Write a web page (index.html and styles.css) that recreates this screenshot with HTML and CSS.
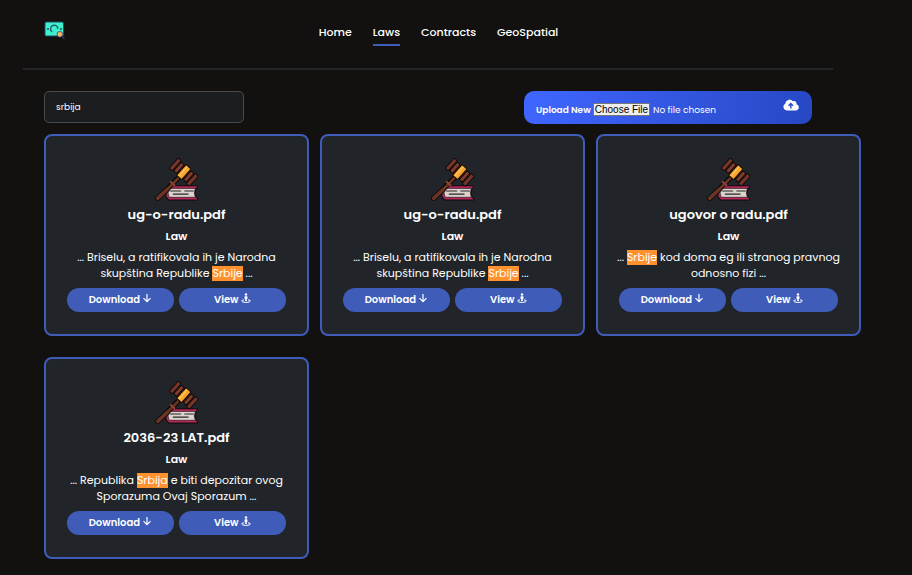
FILE: index.html
```
<!DOCTYPE html>
<html lang="sr-Latn">
<head>
<meta charset="utf-8">
<meta name="viewport" content="width=device-width, initial-scale=1">
<title>Laws</title>
<link rel="stylesheet" href="styles.css">
</head>
<body>
<svg class="sprite" aria-hidden="true">
  <symbol id="gavel" viewBox="0 0 42 42">
    <path d="M13 26.500H40.500Q41 28 39 29.500L38 33.500 39 37Q41.500 38.500 40.500 40H13Q9.500 36.500 10.500 34.500Q9.500 30 13 26.500Z" fill="#b5265b" stroke="#0d0b0c"/>
    <path d="M13.500 29H38.500L37.500 33.500 38.500 37.500H13.500Q11.500 33.500 13.500 29Z" fill="#dcd4cc" stroke="#151214" stroke-width=".6"/>
    <path d="M14 31.500H25M28 31.500H37M17 34.500H32" stroke="#29262a" stroke-width="1"/>
    <path d="M2.500 38.500 11.500 30 15.500 25.500 22.500 19" fill="none" stroke="#0d0908" stroke-width="5" stroke-linecap="round"/>
    <path d="M2.500 38.500 11.500 30" fill="none" stroke="#6b3525" stroke-width="3.400" stroke-linecap="round"/>
    <path d="M11.500 30 22.500 19" fill="none" stroke="#6b3525" stroke-width="2.600"/>
    <path d="M14.500 22.500 19 26.500" stroke="#8c4535" stroke-width="2"/>
    <g transform="translate(27.500 13.500) rotate(42)" stroke="#0d0908" stroke-width=".9">
      <rect x="-11" y="-5" width="22" height="10" fill="#5a281d"/>
      <rect x="-13" y="-6.500" width="4" height="13" rx="1" fill="#733628"/>
      <rect x="-8" y="-5.500" width="3.500" height="11" rx="1" fill="#823d2d"/>
      <rect x="-3.200" y="-6.800" width="6.400" height="13.600" rx=".7" fill="#f8a52f"/>
      <path d="M-1 -6V6" stroke="#ffc45b" stroke-width="1.300"/>
      <rect x="4.500" y="-5.500" width="3.500" height="11" rx="1" fill="#823d2d"/>
      <rect x="9" y="-6.500" width="4" height="13" rx="1" fill="#733628"/>
    </g>
  </symbol>
  <symbol id="arrow" viewBox="0 0 10 10">
    <path d="M5 1V8.500M1.500 5.200 5 8.700 8.500 5.200" fill="none" stroke="currentColor" stroke-width="1.200"/>
  </symbol>
  <symbol id="viewer" viewBox="0 0 10 10">
    <circle cx="5" cy="1.500" r="1.200" fill="currentColor"/>
    <path d="M3.600 3.300H6.400V6H5.800V8H4.200V6H3.600Z" fill="currentColor"/>
    <path d="M3 6.800Q.5 7.200 .6 8 1 9.400 5 9.400 9 9.400 9.400 8 9.500 7.200 7 6.800" fill="none" stroke="currentColor"/>
  </symbol>
</svg>

<header class="header">
  <a class="logo" href="#" aria-label="Home page">
    <svg viewBox="0 0 22 20" aria-hidden="true">
      <rect x="1" y="2" width="18.500" height="14" rx="1.500" fill="#3ff0cf" stroke="#204a65"/>
      <path d="M8.200 12A3.700 3.700 0 1 1 13.900 9" fill="none" stroke="#23566c" stroke-width="1.300"/>
      <circle cx="4" cy="9" r="1" fill="#23566c"/>
      <circle cx="17" cy="9" r="1" fill="#23566c"/>
      <path d="M17.500 16 20.500 19" stroke="#29345b" stroke-width="1.500"/>
      <circle cx="15.800" cy="14.300" r="2.800" fill="#ffb169" stroke="#344261" stroke-width=".8"/>
    </svg>
  </a>
  <nav class="nav">
    <a href="#">Home</a>
    <a class="active" href="#" aria-current="page">Laws</a>
    <a href="#">Contracts</a>
    <a href="#">GeoSpatial</a>
  </nav>
</header>

<main class="content">
  <div class="toolbar">
    <input class="search" type="text" value="srbija" aria-label="Search laws">
    <div class="upload">
      <label for="file">Upload New</label>
      <input id="file" type="file">
      <svg class="cloud" viewBox="0 0 16 12" aria-hidden="true">
        <path d="M4 11.500A3.600 3.600 0 0 1 2.200 4.800 4.300 4.300 0 0 1 9.800 2.200 2.600 2.600 0 0 1 13.400 5.200 3.200 3.200 0 0 1 12.800 11.500Z" fill="#fff"/>
        <path d="M7.800 9.500V5M5.500 6.800 7.800 4.500 10.100 6.800" fill="none" stroke="#2d50cf" stroke-width="1.500"/>
      </svg>
    </div>
  </div>

  <div class="cards">
    <article class="card">
      <svg class="gavel" aria-hidden="true"><use href="#gavel"/></svg>
      <h2>ug-o-radu.pdf</h2>
      <h3>Law</h3>
      <p>... Briselu, a ratifikovala ih je Narodna skupština Republike <mark>Srbije</mark> ...</p>
      <div class="actions">
        <button type="button">Download <svg aria-hidden="true"><use href="#arrow"/></svg></button>
        <button type="button">View <svg aria-hidden="true"><use href="#viewer"/></svg></button>
      </div>
    </article>
    <article class="card">
      <svg class="gavel" aria-hidden="true"><use href="#gavel"/></svg>
      <h2>ug-o-radu.pdf</h2>
      <h3>Law</h3>
      <p>... Briselu, a ratifikovala ih je Narodna skupština Republike <mark>Srbije</mark> ...</p>
      <div class="actions">
        <button type="button">Download <svg aria-hidden="true"><use href="#arrow"/></svg></button>
        <button type="button">View <svg aria-hidden="true"><use href="#viewer"/></svg></button>
      </div>
    </article>
    <article class="card">
      <svg class="gavel" aria-hidden="true"><use href="#gavel"/></svg>
      <h2>ugovor o radu.pdf</h2>
      <h3>Law</h3>
      <p>... <mark>Srbije</mark> kod doma eg ili stranog pravnog odnosno fizi ...</p>
      <div class="actions">
        <button type="button">Download <svg aria-hidden="true"><use href="#arrow"/></svg></button>
        <button type="button">View <svg aria-hidden="true"><use href="#viewer"/></svg></button>
      </div>
    </article>
    <article class="card">
      <svg class="gavel" aria-hidden="true"><use href="#gavel"/></svg>
      <h2>2036-23 LAT.pdf</h2>
      <h3>Law</h3>
      <p>... Republika <mark>Srbija</mark> e biti depozitar ovog Sporazuma Ovaj Sporazum ...</p>
      <div class="actions">
        <button type="button">Download <svg aria-hidden="true"><use href="#arrow"/></svg></button>
        <button type="button">View <svg aria-hidden="true"><use href="#viewer"/></svg></button>
      </div>
    </article>
  </div>
</main>
</body>
</html>
```
FILE: styles.css
```
* {
  box-sizing: border-box;
}

body {
  margin: 0;
  background: #12110f;
  color: #fff;
  font-family: Poppins, Inter, sans-serif;
  font-size: 11px;
  line-height: 16px;
}

.sprite {
  display: none;
}

.header {
  display: grid;
  margin: 0 79px 0 23px;
  padding: 20px 0 22px 21px;
  border-bottom: 2px solid #232529;
}

.logo,
.nav {
  grid-area: 1 / 1;
}

.logo {
  justify-self: start;
}

.logo svg {
  display: block;
  width: 22px;
  height: 20px;
}

.nav {
  display: flex;
  justify-self: center;
  gap: 21px;
}

.nav a {
  padding: 4px 0;
  border-bottom: 2px solid transparent;
  color: #fff;
  font-weight: 500;
  text-decoration: none;
}

.nav a.active {
  border-color: #3f5cb8;
}

.content {
  padding: 21px 51px 17px 44px;
}

.toolbar {
  display: flex;
  justify-content: space-between;
  align-items: flex-start;
  margin: 0 49px 10px 0;
}

.search {
  width: 200px;
  height: 32px;
  padding: 0 11px;
  border: 1px solid #494a4c;
  border-radius: 5px;
  background: #1b1d1f;
  color: #fff;
  font: inherit;
  font-size: 9px;
}

.upload {
  display: flex;
  align-items: center;
  gap: 2px;
  width: 288px;
  height: 33px;
  padding: 5px 13px 0 12px;
  border-radius: 10px;
  background: linear-gradient(100deg, #4066ff, #2748c4);
  font-size: 9px;
}

.upload label {
  font-weight: 600;
}

.upload input {
  flex: 1;
  min-width: 0;
  font: inherit;
}

.upload input::file-selector-button {
  margin: 0 3px 0 0;
  padding: 0 1px;
  border: 1px solid #767676;
  background: #efefef;
  color: #000;
  font: 10px/11px "Liberation Sans", sans-serif;
}

.cloud {
  align-self: flex-start;
  width: 16px;
  height: 12px;
  margin-top: 3px;
}

.cards {
  display: grid;
  grid-template-columns: repeat(3, 1fr);
  gap: 21px 11px;
}

.card {
  display: flex;
  flex-direction: column;
  align-items: center;
  padding: 22px 21px;
  border: 2px solid #3f5cb8;
  border-radius: 8px;
  background: #212529;
  text-align: center;
}

.gavel {
  width: 44px;
  height: 44px;
}

.card h2 {
  margin: 3px 0;
  font-size: 13px;
  font-weight: 600;
  line-height: 20px;
}

.card h3 {
  margin: 0 0 5px;
  font-size: 11px;
  font-weight: 600;
}

.card p {
  margin: 0 -5px 7px;
}

.card mark {
  display: inline-block;
  background: #ff922f;
  color: #fff;
  line-height: 15px;
}

.actions {
  display: flex;
  align-self: stretch;
  gap: 5px;
}

.actions button {
  flex: 1;
  height: 24px;
  padding: 0;
  border: 0;
  border-radius: 12px;
  background: #3f5cb8;
  color: #fff;
  font: inherit;
  font-size: 10px;
  font-weight: 600;
}

.actions svg {
  width: 10px;
  height: 10px;
}
```
